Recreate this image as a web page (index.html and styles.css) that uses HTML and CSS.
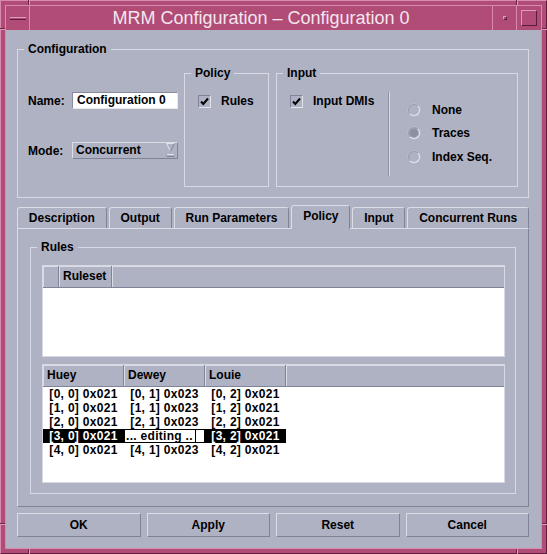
FILE: index.html
```html
<!DOCTYPE html>
<html>
<head>
<meta charset="utf-8">
<title>MRM Configuration</title>
<link rel="stylesheet" href="styles.css">
</head>
<body>
<div class="window">
  <span class="tick tick-top tick-l"></span>
  <span class="tick tick-top tick-r"></span>
  <span class="tick tick-bottom tick-l"></span>
  <span class="tick tick-bottom tick-r"></span>
  <span class="tick tick-left tick-t"></span>
  <span class="tick tick-left tick-b"></span>
  <span class="tick tick-right tick-t"></span>
  <span class="tick tick-right tick-b"></span>
  <div class="inner">
    <div class="titlebar">
      <div class="tb-btn tb-min"><span class="min-bar"></span></div>
      <div class="tb-title">MRM Configuration – Configuration 0</div>
      <div class="tb-btn tb-dot"><span class="dot"></span></div>
      <div class="tb-btn tb-max"><span class="max-box"></span></div>
    </div>
    <div class="content">
      <fieldset class="group config">
        <legend>Configuration</legend>
        <div class="config-body">
          <div class="fields">
            <div class="field-row"><span class="field-label">Name:</span><div class="textfield">Configuration 0</div></div>
            <div class="field-row"><span class="field-label">Mode:</span>
              <div class="combo"><span>Concurrent</span>
                <svg class="combo-icon" width="9" height="15" viewBox="0 0 9 15">
                  <path d="M0.5 0.5 H8.5" stroke="#e2e4ec" stroke-width="1" fill="none"/>
                  <path d="M0.5 0.5 L4.5 8" stroke="#e2e4ec" stroke-width="1" fill="none"/>
                  <path d="M8.5 0.5 L4.5 8" stroke="#7d8193" stroke-width="1" fill="none"/>
                  <path d="M0 11.5 H9" stroke="#e2e4ec" stroke-width="1"/>
                  <path d="M0 13.5 H9" stroke="#7d8193" stroke-width="1"/>
                  <path d="M0.5 11 V14 M8.5 11 V14" stroke="#9ea2b3" stroke-width="1"/>
                </svg>
              </div>
            </div>
          </div>
          <fieldset class="group policy">
            <legend>Policy</legend>
            <div class="check-row">
              <span class="checkbox"><svg width="11" height="11" viewBox="0 0 11 11"><path d="M2 5.5 L4.3 8 L9 2.5" stroke="#000" stroke-width="2" fill="none"/></svg></span>
              <span>Rules</span>
            </div>
          </fieldset>
          <fieldset class="group input">
            <legend>Input</legend>
            <div class="input-body">
              <div class="dmi">
                <div class="check-row">
                  <span class="checkbox"><svg width="11" height="11" viewBox="0 0 11 11"><path d="M2 5.5 L4.3 8 L9 2.5" stroke="#000" stroke-width="2" fill="none"/></svg></span>
                  <span>Input DMIs</span>
                </div>
              </div>
              <div class="vsep"></div>
              <div class="radios">
                <div class="radio-row"><span class="radio"></span><span>None</span></div>
                <div class="radio-row"><span class="radio on"></span><span>Traces</span></div>
                <div class="radio-row"><span class="radio"></span><span>Index Seq.</span></div>
              </div>
            </div>
          </fieldset>
        </div>
      </fieldset>

      <div class="tabs">
        <div class="tab">Description</div>
        <div class="tab">Output</div>
        <div class="tab">Run Parameters</div>
        <div class="tab active">Policy</div>
        <div class="tab">Input</div>
        <div class="tab">Concurrent Runs</div>
      </div>

      <div class="panel">
        <fieldset class="group rules">
          <legend>Rules</legend>
          <div class="rules-body">
            <div class="table t1">
              <div class="thead">
                <div class="th th-corner"></div>
                <div class="th th-ruleset">Ruleset</div>
                <div class="th th-fill"></div>
              </div>
              <div class="tbody"></div>
            </div>
            <div class="table t2">
              <div class="thead">
                <div class="th th-col">Huey</div>
                <div class="th th-col">Dewey</div>
                <div class="th th-col">Louie</div>
                <div class="th th-fill"></div>
              </div>
              <div class="tbody">
                <div class="tr"><div class="td">[0, 0] 0x021</div><div class="td">[0, 1] 0x023</div><div class="td">[0, 2] 0x021</div></div>
                <div class="tr"><div class="td">[1, 0] 0x021</div><div class="td">[1, 1] 0x023</div><div class="td">[1, 2] 0x021</div></div>
                <div class="tr"><div class="td">[2, 0] 0x021</div><div class="td">[2, 1] 0x023</div><div class="td">[2, 2] 0x021</div></div>
                <div class="tr sel"><div class="td">[3, 0] 0x021</div><div class="td edit">... editing ..<span class="caret"></span></div><div class="td">[3, 2] 0x021</div></div>
                <div class="tr"><div class="td">[4, 0] 0x021</div><div class="td">[4, 1] 0x023</div><div class="td">[4, 2] 0x021</div></div>
              </div>
            </div>
          </div>
        </fieldset>
      </div>

      <div class="buttons">
        <div class="btn">OK</div>
        <div class="btn">Apply</div>
        <div class="btn">Reset</div>
        <div class="btn">Cancel</div>
      </div>
    </div>
  </div>
</div>
</body>
</html>
```
FILE: styles.css
```css
* { box-sizing: border-box; }
html, body { margin: 0; padding: 0; }
body {
  background: #b04c76;
  font-family: "Liberation Sans", Arial, sans-serif;
  font-size: 12px;
  font-weight: bold;
  color: #000;
}
.window {
  position: relative;
  width: 547px;
  height: 554px;
  background: #b04c76;
  border: 1px solid;
  border-color: #d98ab0 #5e1c3b #5e1c3b #d98ab0;
  padding: 4px;
}
.inner {
  height: 100%;
  border: 1px solid #d98ab0;
  display: flex;
  flex-direction: column;
}

/* frame resize ticks */
.tick { position: absolute; display: block; }
.tick-top, .tick-bottom { width: 2px; height: 5px; border-left: 1px solid #6a2444; border-right: 1px solid #e09abb; }
.tick-top { top: -1px; }
.tick-bottom { bottom: -1px; }
.tick-top.tick-l, .tick-bottom.tick-l { left: 27px; }
.tick-top.tick-r, .tick-bottom.tick-r { left: 515px; }
.tick-left, .tick-right { height: 2px; width: 5px; border-top: 1px solid #6a2444; border-bottom: 1px solid #e09abb; }
.tick-left { left: -1px; }
.tick-right { right: -1px; }
.tick-left.tick-t, .tick-right.tick-t { top: 27px; }
.tick-left.tick-b, .tick-right.tick-b { top: 522px; }

/* title bar */
.titlebar {
  display: flex;
  height: 24px;
  background: #b04c76;
}
.tb-btn {
  width: 24px;
  display: flex;
  align-items: center;
  justify-content: center;
}
.tb-min { border-right: 1px solid #d98ab0; }
.tb-dot { border-right: 1px solid #d98ab0; }
.tb-title {
  flex: 1;
  border-right: 1px solid #d98ab0;
  text-align: center;
  color: #f4e6ee;
  font-weight: normal;
  font-size: 18px;
  line-height: 24px;
  white-space: nowrap;
}
.min-bar {
  width: 16px;
  height: 3px;
  border-top: 1px solid #e09abb;
  border-bottom: 1px solid #5e1c3b;
}
.dot {
  width: 4px;
  height: 4px;
  border: 1px solid;
  border-color: #e09abb #5e1c3b #5e1c3b #e09abb;
}
.max-box {
  width: 16px;
  height: 16px;
  border: 1px solid;
  border-color: #e09abb #5e1c3b #5e1c3b #e09abb;
}

/* content */
.content {
  flex: 1;
  background: #aeb2c3;
  padding: 12px 12px 11px 11px;
  display: flex;
  flex-direction: column;
}

.group {
  margin: 0;
  padding: 0;
  min-width: 0;
  border: 1px solid #d7dae4;
}
legend {
  margin-left: 6px;
  padding: 0 4px;
  line-height: 14px;
}

.config-body {
  display: flex;
  height: 141px;
  padding: 10px 10px 10px 10px;
}
.fields {
  width: 150px;
  margin-right: 6px;
  padding-top: 26px;
  display: flex;
  flex-direction: column;
  gap: 33px;
}
.field-row {
  display: flex;
  align-items: center;
  height: 17px;
}
.field-label { width: 44px; }
.textfield {
  width: 106px;
  height: 17px;
  background: #fff;
  border: 1px solid;
  border-color: #878b9d #e6e8ef #e6e8ef #878b9d;
  padding-left: 4px;
  line-height: 15px;
}
.combo {
  width: 106px;
  height: 17px;
  border: 1px solid;
  border-color: #dadde6 #7f8395 #7f8395 #dadde6;
  display: flex;
  align-items: center;
  justify-content: space-between;
  padding: 0 2px 0 3px;
  line-height: 15px;
}
.combo-icon { display: block; }

.policy { width: 85px; margin-right: 7px; }
.input { flex: 1; }

.check-row {
  display: flex;
  align-items: center;
  gap: 10px;
}
.policy .check-row { padding: 14px 0 0 13px; }
.checkbox {
  width: 13px;
  height: 13px;
  border: 1px solid;
  border-color: #80849a #e2e4ec #e2e4ec #80849a;
  display: flex;
}
.checkbox svg { display: block; }

.input-body {
  display: flex;
  padding-left: 13px;
}
.dmi { width: 98px; padding-top: 14px; }
.vsep {
  width: 2px;
  height: 84px;
  margin-top: 12px;
  border-left: 1px solid #8c90a2;
  border-right: 1px solid #dadde6;
}
.radios {
  margin-left: 18px;
  padding-top: 18px;
}
.radio-row {
  display: flex;
  align-items: center;
  gap: 12px;
  height: 23.5px;
}
.radio {
  width: 12px;
  height: 12px;
  border-radius: 50%;
  border: 1px solid;
  border-color: #9a9eae #e4e6ee #e4e6ee #9a9eae;
  box-shadow: 0 0 0 0.5px #c4c7d2;
}
.radio.on { background: #8c90a2; box-shadow: inset 0 0 0 1px #a0a4b4, 0 0 0 0.5px #c4c7d2; }

/* tabs */
.tabs {
  display: flex;
  gap: 2px;
  margin-top: 7px;
  height: 23px;
  flex: none;
  align-items: flex-end;
  position: relative;
  z-index: 1;
}
.tab {
  flex: 1 1 auto;
  height: 21px;
  padding: 0 9px;
  text-align: center;
  line-height: 20px;
  white-space: nowrap;
  border: 1px solid;
  border-bottom: none;
  border-color: #dadde6 #7f8395 transparent #dadde6;
  border-radius: 3px 3px 0 0;
}
.tab.active {
  height: 24px;
  margin-bottom: -1px;
  background: #aeb2c3;
  line-height: 20px;
}

.panel {
  height: 279px;
  flex: none;
  border: 1px solid;
  border-color: #dadde6 #7f8395 #7f8395 #dadde6;
  padding: 11px 12px 12px 12px;
  display: flex;
}
.rules { flex: 1; }
.rules-body { padding: 11px 10px 10px 11px; }

.table {
  border: 1px solid #d6d9e3;
  background: #fff;
  display: flex;
  flex-direction: column;
  overflow: hidden;
}
.t1 { height: 92px; margin-bottom: 7px; }
.t2 { height: 119px; }
.thead {
  display: flex;
  height: 22px;
  flex: none;
  background: #aeb2c3;
  border-bottom: 1px solid #80849a;
}
.th {
  height: 21px;
  line-height: 21px;
  padding-left: 4px;
  border-right: 1px solid #80849a;
  box-shadow: inset 1px 1px 0 #dadde6;
  white-space: nowrap;
}
.th-corner { width: 16px; }
.th-ruleset { width: 53px; }
.th-col { width: 81px; }
.th-fill { flex: 1; border-right: none; }

.tbody { flex: 1; }
.tr { display: flex; height: 14px; }
.td {
  width: 81px;
  text-align: center;
  line-height: 14px;
  letter-spacing: 0.3px;
  white-space: nowrap;
}
.tr.sel .td { background: #000; color: #fff; }
.tr.sel .td.edit {
  background: #fff;
  color: #000;
  border: 1px solid #000;
  text-align: left;
  padding-left: 1px;
  line-height: 12px;
  display: flex;
  align-items: stretch;
}
.caret {
  width: 1px;
  background: #000;
  margin-left: 2px;
}

/* buttons */
.buttons {
  display: flex;
  gap: 6px;
  margin-top: 6px;
  height: 24px;
  flex: none;
}
.btn {
  flex: 1;
  border: 1px solid;
  border-color: #dadde6 #7f8395 #7f8395 #dadde6;
  text-align: center;
  line-height: 22px;
}
```
